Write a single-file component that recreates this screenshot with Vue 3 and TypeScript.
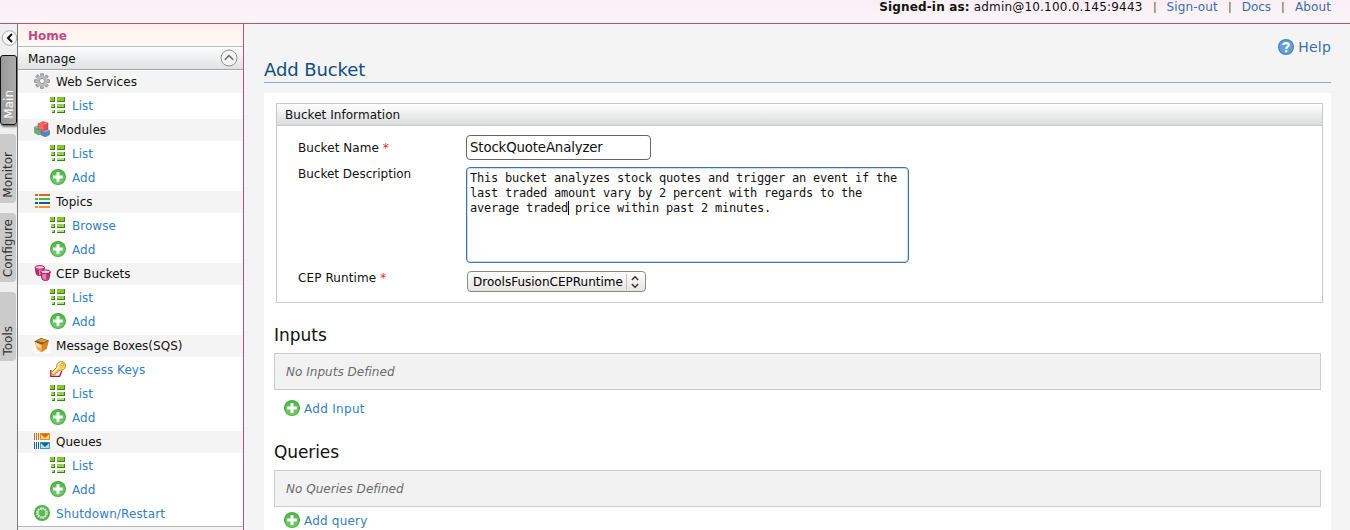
<script setup lang="ts">
interface MenuItem {
  label: string
  icon: string
  level: 'group' | 'child' | 'action'
}

const items: MenuItem[] = [
  { label: 'Web Services', icon: 'gear', level: 'group' },
  { label: 'List', icon: 'list', level: 'child' },
  { label: 'Modules', icon: 'modules', level: 'group' },
  { label: 'List', icon: 'list', level: 'child' },
  { label: 'Add', icon: 'add', level: 'child' },
  { label: 'Topics', icon: 'topics', level: 'group' },
  { label: 'Browse', icon: 'list', level: 'child' },
  { label: 'Add', icon: 'add', level: 'child' },
  { label: 'CEP Buckets', icon: 'buckets', level: 'group' },
  { label: 'List', icon: 'list', level: 'child' },
  { label: 'Add', icon: 'add', level: 'child' },
  { label: 'Message Boxes(SQS)', icon: 'box', level: 'group' },
  { label: 'Access Keys', icon: 'key', level: 'child' },
  { label: 'List', icon: 'list', level: 'child' },
  { label: 'Add', icon: 'add', level: 'child' },
  { label: 'Queues', icon: 'queues', level: 'group' },
  { label: 'List', icon: 'list', level: 'child' },
  { label: 'Add', icon: 'add', level: 'child' },
  { label: 'Shutdown/Restart', icon: 'shutdown', level: 'action' },
]

const tabs = ['Main', 'Monitor', 'Configure', 'Tools']
const teeth = [0, 45, 90, 135, 180, 225, 270, 315]
const rays = Array.from({ length: 12 }, (_, i) => i * 30)
</script>

<template>
  <div class="page">
    <svg class="defs" width="0" height="0" aria-hidden="true">
      <linearGradient id="g-add" x1="0" y1="0" x2="0" y2="1">
        <stop offset="0" stop-color="#4db644" /><stop offset="1" stop-color="#7cc96e" />
      </linearGradient>
      <linearGradient id="g-gear" x1="0" y1="0" x2="1" y2="1">
        <stop offset="0" stop-color="#c9c9c9" /><stop offset="1" stop-color="#858585" />
      </linearGradient>
      <symbol id="i-gear" viewBox="0 0 16 16">
        <g fill="url(#g-gear)" stroke="#8b8b8b" stroke-width=".7">
          <rect v-for="a in teeth" :key="a" x="6.5" y=".4" width="3" height="4" rx=".5" :transform="`rotate(${a} 8 8)`" />
        </g>
        <circle cx="8" cy="8" r="5.6" fill="#c6c6c6" />
        <circle cx="8" cy="8" r="4.2" fill="none" stroke="#b2b2b2" stroke-width="1" />
        <circle cx="8" cy="8" r="2.6" fill="#f4f4f4" stroke="#888" stroke-width=".8" />
      </symbol>
      <symbol id="i-list" viewBox="0 0 16 16">
        <path fill="#3f7d22" d="M0 0h5v5H0zM7 0h8v5H7zM1 7h4v4H1zM7 7h8v4H7zM2 13h3v3H2zM7 13h8v3H7z" />
        <path fill="#86c636" d="M0 0h4v4H0zM7 0h7v4H7z" />
        <path fill="#98cd57" d="M1 7h3v3H1zM7 7h7v3H7z" />
        <path fill="#b5dc91" d="M2 13h2v2H2zM7 13h7v2H7z" />
      </symbol>
      <symbol id="i-add" viewBox="0 0 16 16">
        <circle cx="8" cy="8" r="8" fill="#46ad3f" />
        <circle cx="8" cy="8" r="7.1" fill="url(#g-add)" />
        <path fill="#fff" d="M6.5 3.2h3v3.3h3.3v3H9.5v3.3h-3V9.5H3.2v-3h3.3z" />
      </symbol>
      <symbol id="i-modules" viewBox="0 0 16 16">
        <path fill="#5fae78" stroke="#4c8d62" stroke-width=".5" d="M.5 6 4.5 4.8 8 6v6.5L4.6 14 .5 11.7z" />
        <path fill="#91cda2" d="M.8 6.2 4.5 5.1l3 1L4.2 7.5z" />
        <path fill="#5785bd" stroke="#416da6" stroke-width=".5" d="M7 9.5 12 8l3.7 1.4v4.2L11.5 16 7 14z" />
        <path fill="#8ab1dc" d="m7.2 9.7 4.7-1.4 3.4 1.3-4 1.6z" />
        <path fill="#df4b50" stroke="#cc3b42" stroke-width=".5" d="M4 2.6 9.5.8 14 2v6.2l-4.3 1.6L4 8z" />
        <path fill="#f58483" d="M4.3 2.8 9.5 1.1l4 1.1-4 1.6z" />
        <path fill="#f06b6c" d="M4.4 3.2 9.4 4.2v5.2L4.4 7.7z" />
        <ellipse cx="9" cy="1.6" rx="1.6" ry=".9" fill="#ef696a" stroke="#cc3b42" stroke-width=".4" />
      </symbol>
      <symbol id="i-topics" viewBox="0 0 16 16">
        <path fill="#cf6c20" d="M1 1h3v2H1zM5 1h11v2H5z" />
        <path fill="#51b548" d="M1 5h3v2H1zM5 5h11v2H5z" />
        <path fill="#085da5" d="M1 9h3v2H1zM5 9h11v2H5z" />
        <path fill="#f7941e" d="M1 13h3v2H1zM5 13h11v2H5z" />
      </symbol>
      <symbol id="i-buckets" viewBox="0 0 18 16">
        <path fill="#d987ae" stroke="#ae0d5d" d="M1.2 2.4 2.4 9.2c.5 1.6 5.6 1.6 6.5 0l1.5-6.8z" />
        <path fill="#b8266b" d="m1.5 4 .9 5c.6 1 1.6 1.2 2.6 1.2V5z" />
        <ellipse cx="5.8" cy="2.4" rx="4.6" ry="1.8" fill="#f3cfdf" stroke="#ae0d5d" />
        <path fill="#d685ab" stroke="#ae0d5d" d="m6.9 6.8 1.2 7.4c.6 1.6 6 1.6 6.7 0L16.2 6.8z" />
        <path fill="#be3476" d="m12.4 9 3-.6-1 5.6c-.5.7-1.2.9-2 1z" />
        <ellipse cx="11.5" cy="6.8" rx="4.7" ry="1.9" fill="#f3cfdf" stroke="#ae0d5d" />
      </symbol>
      <symbol id="i-box" viewBox="0 0 16 16">
        <path fill="#fff" d="M0 0h16v16H0z" />
        <path fill="#f7b04c" d="M.4 4.4 7.6 7.6 7.2 15.6 3 12.2z" />
        <path fill="#d9851f" d="m7.6 7.6 7.4-4-2.2 8.2-5.6 3.8z" />
        <path fill="#7a5216" d="M.3 4.4 6.8 1 15.2 3.5 7.6 7.8z" />
        <path fill="#e0a047" d="m6.8 1.8 6.6 1.7-3.7 2-7-1.5z" />
        <path fill="#a56c1c" d="m2.4 4.2 6.6 1.4-1.5 1z" />
        <path fill="#ffdca4" d="M1.5 5.7 7 8.2l-.2 3.4L2.8 9z" />
      </symbol>
      <symbol id="i-key" viewBox="0 0 16 16">
        <path fill="#fff" stroke="#b30b60" stroke-width="1.3" d="M.8 9v6.3h8.8L11.7 10" />
        <path fill="#f8d264" stroke="#c08c23" d="m1.3 11.7 5.5-5.5C6.1 3.2 8.4.8 11.3.6c2.8 0 4.7 2.3 4.1 5.1-.5 2.6-2.7 4-5.3 3.4l-1 1H7.3v1.7H5.6v1.6L4.3 14 2.1 13.9z" />
        <path fill="none" stroke="#fff0a4" stroke-width="1.2" d="m2.7 12 5.3-5.3C7.6 4 9 2 11.3 1.9" />
        <circle cx="12.2" cy="3.7" r="1.3" fill="#fff" stroke="#c08c23" stroke-width=".7" />
      </symbol>
      <symbol id="i-queues" viewBox="0 0 16 16">
        <path fill="#ce6b1c" d="M0 0h1v7H0zM2 0h1v7H2zM4 0h1v7H4z" />
        <path fill="#e58e2a" d="M6 0h10v7H6z" /><path fill="#f6d571" d="M7 1h8v5H7z" />
        <path fill="#ce6b1c" d="M6.5.8h9L11 5z" />
        <path fill="#086b91" d="M0 9h1v7H0zM2 9h1v7H2zM4 9h1v7H4z" />
        <path fill="#4d93b9" d="M6 9h10v7H6z" /><path fill="#b9d9ec" d="M7 10h8v5H7z" />
        <path fill="#086b91" d="M6.5 9.8h9L11 14z" />
      </symbol>
      <symbol id="i-shutdown" viewBox="0 0 16 16">
        <circle cx="8" cy="8" r="8" fill="#4eb347" />
        <circle cx="8" cy="8" r="5.8" fill="#fff" />
        <path v-for="a in rays" :key="a" stroke="#4eb347" stroke-width=".8" d="M8 2v2.4" :transform="`rotate(${a} 8 8)`" />
        <circle cx="8" cy="8" r="3.4" fill="#5aba52" />
      </symbol>
      <symbol id="i-help" viewBox="0 0 16 16">
        <circle cx="8" cy="8" r="8" fill="#3f85c4" />
        <circle cx="8" cy="8" r="6.8" fill="#6a9fd2" />
        <path fill="none" stroke="#fff" stroke-width="2.1" d="M5.3 6.1C5.3 3.6 10.9 3.3 10.9 6c0 1.8-2.7 1.6-2.7 4" />
        <path fill="#fff" d="M7.1 11.2h2.2v2H7.1z" />
      </symbol>
    </svg>

    <header class="topbar">
      <strong class="signed">Signed-in as:</strong>
      <span class="user">admin@10.100.0.145:9443</span>
      <i class="bar first"></i><a class="signout">Sign-out</a>
      <i class="bar"></i><a class="docs">Docs</a>
      <i class="bar"></i><a class="about">About</a>
    </header>

    <div class="body">
      <aside class="strip">
        <svg class="collapse" width="17" height="18" viewBox="0 0 17 18">
          <circle cx="9.5" cy="9" r="7.3" fill="#fafafa" stroke="#a9a9a9" />
          <path d="M12 5 8 9l4 4" fill="none" stroke="#111" stroke-width="2" />
        </svg>
        <div v-for="tab in tabs" :key="tab" class="tab" :class="{ active: tab === 'Main' }">
          <span>{{ tab }}</span>
        </div>
      </aside>

      <nav class="menu">
        <div class="home">Home</div>
        <div class="manage">
          <span>Manage</span>
          <svg width="18" height="18" viewBox="0 0 18 18">
            <circle cx="9" cy="9" r="8" fill="#f4f4f4" stroke="#929292" />
            <path d="m4.8 10.8 4.2-4.3 4.2 4.3" fill="none" stroke="#666" stroke-width="1.5" />
          </svg>
        </div>
        <div v-for="(item, i) in items" :key="i" class="row" :class="item.level">
          <svg :class="{ wide: item.icon === 'buckets' }" :width="item.icon === 'buckets' ? 18 : 16" height="16"><use :href="`#i-${item.icon}`" /></svg>
          <span>{{ item.label }}</span>
        </div>
        <div class="menu-end"></div>
      </nav>

      <main class="content">
        <div class="help"><svg width="16" height="16"><use href="#i-help" /></svg><span>Help</span></div>
        <h2>Add Bucket</h2>
        <section class="work">
          <div class="panel">
            <div class="panel-head">Bucket Information</div>
            <div class="form">
              <label class="l-name">Bucket Name <em>*</em></label>
              <div class="field text">StockQuoteAnalyzer</div>
              <label class="l-desc">Bucket Description</label>
              <div class="field area">This bucket analyzes stock quotes and trigger an event if the<br />last traded amount vary by 2 percent with regards to the<br />average traded<i class="caret"></i> price within past 2 minutes.</div>
              <label class="l-run">CEP Runtime <em>*</em></label>
              <div class="field select">
                <span>DroolsFusionCEPRuntime</span>
                <svg width="19" height="18" viewBox="0 0 19 18">
                  <path d="M.5 1v16" stroke="#c5c3c1" />
                  <path d="m5.8 7 3.2-3.2L12.2 7M5.8 11 9 14.2l3.2-3.2" fill="none" stroke="#333" stroke-width="1.4" />
                </svg>
              </div>
            </div>
          </div>

          <h3>Inputs</h3>
          <div class="empty">No Inputs Defined</div>
          <div class="adder"><svg width="16" height="16"><use href="#i-add" /></svg><span>Add Input</span></div>
          <h3 class="second">Queries</h3>
          <div class="empty">No Queries Defined</div>
          <div class="adder low"><svg width="16" height="16"><use href="#i-add" /></svg><span>Add query</span></div>
        </section>
      </main>
    </div>
  </div>
</template>

<style>
html, body { margin: 0; overflow: hidden; }
</style>

<style scoped>
.page { width: 1350px; height: 530px; overflow: hidden; display: flex; flex-direction: column; background: #f4f4f4; color: #111; font: 12px/16px "DejaVu Sans", sans-serif; }
.page * { box-sizing: border-box; }
.defs { position: absolute; }
svg { display: block; flex: none; }
span, a, label { white-space: nowrap; }
.topbar { height: 24px; flex: none; display: flex; justify-content: flex-end; align-items: flex-start; padding-right: 19px; border-bottom: 1px solid #b8507f; background: linear-gradient(#faeef5, #fcf5f8); line-height: 14px; }
.signed { margin-right: 4px; letter-spacing: .15px; }
.user { letter-spacing: .2px; }
.topbar a { color: #3a6ea5; }
.signout { letter-spacing: .1px; }
.docs { letter-spacing: -.05px; }
.about { letter-spacing: .1px; }
.bar { width: 2px; height: 11px; margin: 2px 11px 0 11px; background: linear-gradient(90deg, #d98a45 50%, #8fb6dc 50%); }
.body { flex: 1; display: flex; min-height: 0; }
.strip { width: 18px; flex: none; border-right: 1px solid #777; background: #efefef; padding-top: 5px; }
.collapse { margin-bottom: 8px; }
.tab { width: 16px; height: 69px; margin-bottom: 10px; display: flex; align-items: flex-end; justify-content: center; padding-bottom: 5px; border-radius: 0 4px 4px 0; background: #cbcbcb; color: #333; }
.tab span { writing-mode: vertical-rl; transform: rotate(180deg); line-height: 16px; }
.tab.active { width: 17px; height: 70px; margin-bottom: 9px; background: linear-gradient(90deg, #999, #ababab); color: #fff; border: 1px solid #111; border-radius: 3px; box-shadow: 1px 2px 2px #777; }
.menu { width: 226px; flex: none; background: #fff; border-right: 1px solid #b8507f; display: flex; flex-direction: column; }
.home { height: 23px; flex: none; padding: 1px 0 0 10px; line-height: 22px; font-weight: bold; color: #c14a83; background: linear-gradient(#fff0ec, #fff9f5); border-bottom: 1px solid #bcbcbc; }
.manage { height: 23px; flex: none; display: flex; justify-content: space-between; align-items: center; padding: 0 5px 0 10px; background: linear-gradient(#fcfcfc, #e0e2e3); border-bottom: 1px solid #a8a8a8; }
.manage span { padding-top: 2px; }
.row { height: 24px; flex: none; display: flex; align-items: center; gap: 6px; padding: 0 0 2px 16px; }
.row span { padding-top: 2px; letter-spacing: .03px; }
.row .wide { margin-right: -2px; }
.group { background: #f4f4f4; border-top: 1px solid #fff; border-bottom: 1px solid #fff; }
.child { padding-left: 32px; color: #3280c3; }
.action { color: #3280c3; }
.action span { letter-spacing: .12px; }
.menu-end { flex: 1; border-top: 1px solid #b7b7b7; background: #f4f4f4; }
.content { flex: 1; padding: 0 19px 0 20px; display: flex; flex-direction: column; }
.help { height: 32px; padding-top: 14px; display: flex; justify-content: flex-end; align-items: center; gap: 4px; color: #3a6ea5; font-size: 14px; letter-spacing: .2px; }
.content h2 { height: 27px; margin: 0; border-bottom: 1px solid #90a7d1; color: #114e7d; font-size: 18px; font-weight: normal; line-height: 28px; letter-spacing: -.1px; }
.work { flex: 1; margin-top: 10px; background: #fff; padding: 10px 8px 0 10px; }
.panel { height: 200px; margin-left: 2px; border: 1px solid #c8c8c8; }
.panel-head { height: 22px; padding-left: 8px; line-height: 22px; letter-spacing: .05px; border-bottom: 1px solid #c8c8c8; background: linear-gradient(#fff, #d9dbdc); }
.form { display: grid; grid-template-columns: 168px auto; grid-template-rows: 25px 96px 22px; row-gap: 7px; padding: 9px 0 0 21px; justify-content: start; }
.form label { line-height: 16px; }
.form em { color: #f22; font-style: normal; }
.l-name { padding-top: 5px; letter-spacing: .06px; }
.l-desc { margin-top: -1px; }
.l-run { letter-spacing: .1px; }
.text { width: 185px; border: 1px solid #666; border-radius: 4px; padding-left: 3px; font-size: 13.33px; line-height: 24px; letter-spacing: -.15px; }
.area { width: 443px; border: 1px solid #456fa8; box-shadow: inset 0 0 0 1px #c9dcf3; border-radius: 4px; padding: 3px 0 0 3px; font: 12px/15px "DejaVu Sans Mono", monospace; letter-spacing: -.224px; white-space: nowrap; }
.caret { display: inline-block; width: 1px; height: 14px; margin-right: -1px; background: #000; vertical-align: -3px; }
.select { width: 179px; height: 21px; margin: 1px 0 0 1px; padding-left: 5px; display: flex; align-items: center; justify-content: space-between; border: 1px solid #8c8884; border-radius: 4px; background: linear-gradient(#fefefe, #e7e5e3); color: #000; }
.work h3 { margin: 21px 0 0; height: 29px; font-size: 17px; font-weight: normal; line-height: 23px; }
.empty { height: 37px; border: 1px solid #ccc; background: #f2f2f2; padding-left: 11px; line-height: 37px; font-style: italic; color: #6b6b6b; margin-right: 2px; letter-spacing: .03px; }
.adder { display: flex; align-items: center; height: 16px; gap: 4px; margin: 10px 0 0 10px; color: #3280c3; letter-spacing: .3px; }
.adder span { padding-top: 2px; }
.work h3.second { margin-top: 25px; letter-spacing: -.1px; }
.adder.low { margin-top: 5px; letter-spacing: .2px; }
</style>
